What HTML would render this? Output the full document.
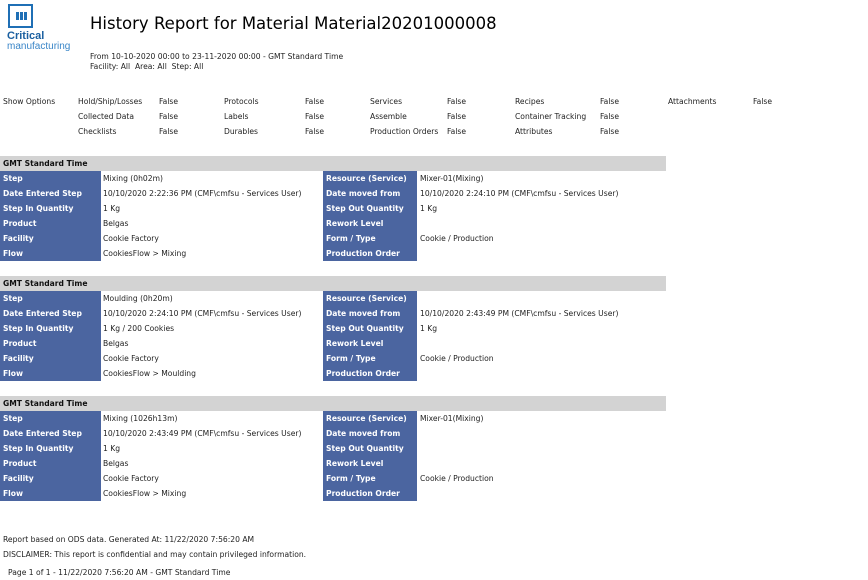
<!DOCTYPE html>
<html><head><meta charset="utf-8"><style>
body{margin:0;width:868px;height:580px;background:#fff;font-family:"DejaVu Sans","Liberation Sans",sans-serif;font-size:7.6px;color:#222;position:relative;overflow:hidden}
.a{position:absolute;white-space:nowrap}
.sec{position:absolute;left:0;width:666px}
.hd{height:15px;background:#d3d3d3;font-weight:bold;line-height:15px;padding-left:3px;color:#111}
.row{height:15px;position:relative;line-height:15px}
.l1,.l2{position:absolute;top:0;height:15px;background:#4b65a0;color:#fff;font-weight:bold;padding-left:3px;box-sizing:border-box}
.l1{left:0;width:101px}.l2{left:323px;width:94px}
.v1{position:absolute;left:103px}.v2{position:absolute;left:420px}
</style></head><body>
<svg class="a" style="left:8px;top:4px" width="25" height="24"><rect x="1" y="1" width="23" height="22" fill="none" stroke="#1f6fb5" stroke-width="2"/><rect x="8" y="8" width="3" height="8" fill="#1f6fb5"/><rect x="12" y="8" width="3" height="8" fill="#1f6fb5"/><rect x="16" y="8" width="3" height="8" fill="#1f6fb5"/></svg>
<div class="a" style="left:7px;top:30px;font-family:'Liberation Sans',sans-serif;font-weight:bold;font-size:11px;color:#1a5fa0">Critical</div>
<div class="a" style="left:7px;top:41px;font-family:'Liberation Sans',sans-serif;font-size:10px;color:#3a86c8">manufacturing</div>
<div class="a" style="left:90px;top:14px;font-family:'DejaVu Sans',sans-serif;font-size:16.5px;color:#000">History Report for Material Material20201000008</div>
<div class="a" style="left:90px;top:52px">From 10-10-2020 00:00 to 23-11-2020 00:00 - GMT Standard Time</div>
<div class="a" style="left:90px;top:62px">Facility: All&nbsp; Area: All&nbsp; Step: All</div>
<div class="a" style="left:3px;top:97px">Show Options</div>
<div class="a" style="left:78px;top:97px">Hold/Ship/Losses</div><div class="a" style="left:159px;top:97px">False</div>
<div class="a" style="left:78px;top:112px">Collected Data</div><div class="a" style="left:159px;top:112px">False</div>
<div class="a" style="left:78px;top:127px">Checklists</div><div class="a" style="left:159px;top:127px">False</div>
<div class="a" style="left:224px;top:97px">Protocols</div><div class="a" style="left:305px;top:97px">False</div>
<div class="a" style="left:224px;top:112px">Labels</div><div class="a" style="left:305px;top:112px">False</div>
<div class="a" style="left:224px;top:127px">Durables</div><div class="a" style="left:305px;top:127px">False</div>
<div class="a" style="left:370px;top:97px">Services</div><div class="a" style="left:447px;top:97px">False</div>
<div class="a" style="left:370px;top:112px">Assemble</div><div class="a" style="left:447px;top:112px">False</div>
<div class="a" style="left:370px;top:127px">Production Orders</div><div class="a" style="left:447px;top:127px">False</div>
<div class="a" style="left:515px;top:97px">Recipes</div><div class="a" style="left:600px;top:97px">False</div>
<div class="a" style="left:515px;top:112px">Container Tracking</div><div class="a" style="left:600px;top:112px">False</div>
<div class="a" style="left:515px;top:127px">Attributes</div><div class="a" style="left:600px;top:127px">False</div>
<div class="a" style="left:668px;top:97px">Attachments</div><div class="a" style="left:753px;top:97px">False</div>

<div class="sec" style="top:156px"><div class="hd">GMT Standard Time</div>
<div class="row"><div class="l1">Step</div><div class="v1">Mixing (0h02m)</div><div class="l2">Resource (Service)</div><div class="v2">Mixer-01(Mixing)</div></div>
<div class="row"><div class="l1">Date Entered Step</div><div class="v1">10/10/2020 2:22:36 PM (CMF\cmfsu - Services User)</div><div class="l2">Date moved from</div><div class="v2">10/10/2020 2:24:10 PM (CMF\cmfsu - Services User)</div></div>
<div class="row"><div class="l1">Step In Quantity</div><div class="v1">1 Kg</div><div class="l2">Step Out Quantity</div><div class="v2">1 Kg</div></div>
<div class="row"><div class="l1">Product</div><div class="v1">Belgas</div><div class="l2">Rework Level</div></div>
<div class="row"><div class="l1">Facility</div><div class="v1">Cookie Factory</div><div class="l2">Form / Type</div><div class="v2">Cookie / Production</div></div>
<div class="row"><div class="l1">Flow</div><div class="v1">CookiesFlow &gt; Mixing</div><div class="l2">Production Order</div></div>
</div>

<div class="sec" style="top:276px"><div class="hd">GMT Standard Time</div>
<div class="row"><div class="l1">Step</div><div class="v1">Moulding (0h20m)</div><div class="l2">Resource (Service)</div></div>
<div class="row"><div class="l1">Date Entered Step</div><div class="v1">10/10/2020 2:24:10 PM (CMF\cmfsu - Services User)</div><div class="l2">Date moved from</div><div class="v2">10/10/2020 2:43:49 PM (CMF\cmfsu - Services User)</div></div>
<div class="row"><div class="l1">Step In Quantity</div><div class="v1">1 Kg / 200 Cookies</div><div class="l2">Step Out Quantity</div><div class="v2">1 Kg</div></div>
<div class="row"><div class="l1">Product</div><div class="v1">Belgas</div><div class="l2">Rework Level</div></div>
<div class="row"><div class="l1">Facility</div><div class="v1">Cookie Factory</div><div class="l2">Form / Type</div><div class="v2">Cookie / Production</div></div>
<div class="row"><div class="l1">Flow</div><div class="v1">CookiesFlow &gt; Moulding</div><div class="l2">Production Order</div></div>
</div>

<div class="sec" style="top:396px"><div class="hd">GMT Standard Time</div>
<div class="row"><div class="l1">Step</div><div class="v1">Mixing (1026h13m)</div><div class="l2">Resource (Service)</div><div class="v2">Mixer-01(Mixing)</div></div>
<div class="row"><div class="l1">Date Entered Step</div><div class="v1">10/10/2020 2:43:49 PM (CMF\cmfsu - Services User)</div><div class="l2">Date moved from</div></div>
<div class="row"><div class="l1">Step In Quantity</div><div class="v1">1 Kg</div><div class="l2">Step Out Quantity</div></div>
<div class="row"><div class="l1">Product</div><div class="v1">Belgas</div><div class="l2">Rework Level</div></div>
<div class="row"><div class="l1">Facility</div><div class="v1">Cookie Factory</div><div class="l2">Form / Type</div><div class="v2">Cookie / Production</div></div>
<div class="row"><div class="l1">Flow</div><div class="v1">CookiesFlow &gt; Mixing</div><div class="l2">Production Order</div></div>
</div>

<div class="a" style="left:3px;top:535px">Report based on ODS data. Generated At: 11/22/2020 7:56:20 AM</div>
<div class="a" style="left:3px;top:550px">DISCLAIMER: This report is confidential and may contain privileged information.</div>
<div class="a" style="left:8px;top:568px">Page 1 of 1 - 11/22/2020 7:56:20 AM - GMT Standard Time</div>
</body></html>
